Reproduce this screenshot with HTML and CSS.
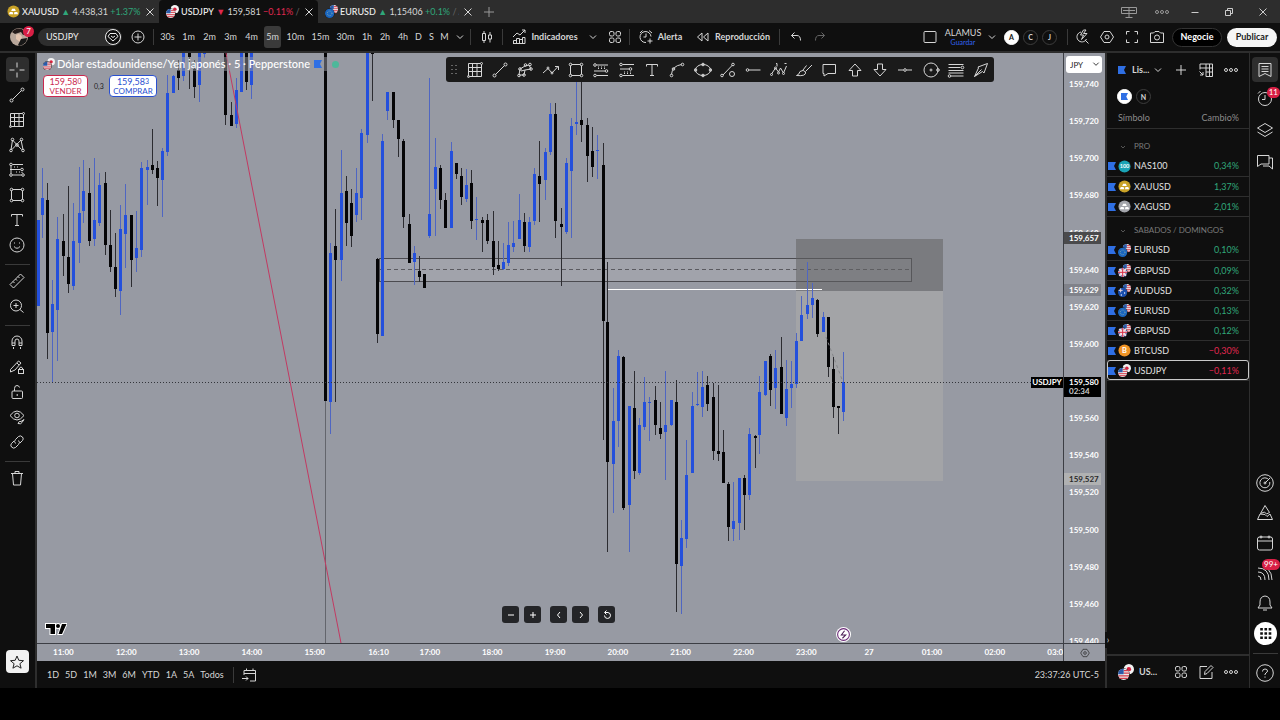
FILE: index.html
```html
<!DOCTYPE html>
<html lang="es">
<head>
  <meta charset="UTF-8" />
  <meta name="viewport" content="width=device-width, initial-scale=1.0"/>
  <title>USDJPY 159,581</title>
  <link rel="stylesheet" href="styles.css">
</head>
<body>

  <!-- icon sprite -->
  <svg class="sprite" aria-hidden="true">
    <symbol id="close" viewBox="0 0 18 18"><path d="M5.5 5.5l7 7M12.5 5.5l-7 7"/></symbol>
    <symbol id="plus" viewBox="0 0 18 18"><path d="M9 4v10M4 9h10"/></symbol>
    <symbol id="chevron" viewBox="0 0 18 18"><path d="M6 7.5l3 3 3-3"/></symbol>
    <symbol id="dots" viewBox="0 0 18 18"><circle cx="4" cy="9" r="1.5"/><circle cx="9" cy="9" r="1.5"/><circle cx="14" cy="9" r="1.5"/></symbol>
    <symbol id="circle-plus" viewBox="0 0 18 18"><circle cx="9" cy="9" r="6"/><path d="M9 5.5v7M5.500 9h7"/></symbol>
    <symbol id="gem" viewBox="0 0 18 18"><circle cx="9" cy="9" r="7.500" fill="#0f0f0f"/><path d="M6 5.500h6l2 3-5 4.500-5-4.500zM7 8l2 1.500L11 8"/></symbol>
    <symbol id="candles" viewBox="0 0 18 18"><path d="M4.500 5.500h3v7h-3zM6 3v2.500M6 12.500V15M10.500 7h3v4h-3zM12 4v3M12 11v3.500"/></symbol>
    <symbol id="indicators" viewBox="0 0 18 18"><path d="M3 9l4-4 3 2 5-5M12 2h3v3M3.500 15.500v-3h3v3M6.500 15.500v-5h3v5M9.500 15.500v-4h3v4M12.500 15.500v-6h2.500v6zM3 15.500h12"/></symbol>
    <symbol id="templates" viewBox="0 0 18 18"><rect x="3.500" y="3.500" width="4.500" height="4.500" rx="1.500"/><rect x="10" y="3.500" width="4.500" height="4.500" rx="1.500"/><rect x="3.500" y="10" width="4.500" height="4.500" rx="1.500"/><rect x="10" y="10" width="4.500" height="4.500" rx="1.500"/></symbol>
    <symbol id="alert" viewBox="0 0 18 18"><path d="M14 8.500A5.500 5.500 0 1 0 9 14.500M9 5.500V9H6.500M3 5l2.500-2.500M12 2.500L15 5M13 10.500v5M10.500 13h5"/></symbol>
    <symbol id="replay" viewBox="0 0 18 18"><path d="M8 5v8L3.500 9zM14 5v8L9.500 9z"/></symbol>
    <symbol id="undo" viewBox="0 0 18 18"><path d="M7.500 4.500L4.500 7.500l3 3M4.500 7.500H10q3.500 0 3.500 5"/></symbol>
    <symbol id="redo" viewBox="0 0 18 18"><path d="M10.500 4.500l3 3-3 3M13.500 7.500H8q-3.500 0-3.500 5"/></symbol>
    <symbol id="layout" viewBox="0 0 18 18"><rect x="3" y="3.500" width="12" height="11" rx="1"/></symbol>
    <symbol id="search" viewBox="0 0 18 18"><path d="M8 4a5 5 0 1 0 5.500 7M12 12l3.500 3.500M10.500 2l-3 5h3l-2 4.500 5.500-6h-3.500L13 2z"/></symbol>
    <symbol id="hexagon" viewBox="0 0 18 18"><path d="M6 3.500h6L15.500 9 12 14.500H6L2.500 9z"/><circle cx="9" cy="9" r="2"/></symbol>
    <symbol id="fullscreen" viewBox="0 0 18 18"><path d="M3.500 6.500v-3h3M11.500 3.500h3v3M14.500 11.500v3h-3M6.500 14.500h-3v-3"/></symbol>
    <symbol id="camera" viewBox="0 0 18 18"><path d="M2.500 5h3L7 3.500h4L12.500 5h3v9.500h-13z"/><circle cx="9" cy="9.500" r="2.500"/></symbol>
    <symbol id="monitor" viewBox="0 0 18 18"><path d="M1.500 4.500h15v6h-15zM9 4.500v10M5.500 14.500h7M3 7.500h12"/></symbol>
    <symbol id="minimize" viewBox="0 0 18 18"><path d="M5.500 9.500h7"/></symbol>
    <symbol id="restore" viewBox="0 0 18 18"><path d="M5.500 7.500h5v5h-5zM7.500 7.500v-2h5v5h-2"/></symbol>
    <symbol id="cross" viewBox="0 0 18 18"><path d="M9 1.500v5M9 11.500v5M1.500 9h5M11.500 9h5"/></symbol>
    <symbol id="line" viewBox="0 0 18 18"><circle cx="3.500" cy="14.500" r="1.500"/><circle cx="14.500" cy="3.500" r="1.500"/><path d="M4.500 13.500l9-9"/></symbol>
    <symbol id="grid" viewBox="0 0 18 18"><path d="M2.500 2.500h12M2.500 2.500v13M2.500 6.500h13M2.500 10.500h13M6.500 2.500v13M11 2.500v13M3.500 15.500h12v-12"/><circle cx="2.500" cy="15.500" r="1"/><circle cx="15.500" cy="2.500" r="1"/></symbol>
    <symbol id="pattern" viewBox="0 0 18 18"><path d="M3 14L4.500 4l9 9.500M4 13.500L13 4l2 9.500"/><circle cx="3" cy="14.500" r="1.300"/><circle cx="4.500" cy="3.500" r="1.300"/><circle cx="9" cy="9" r="1.300"/><circle cx="13.500" cy="3.500" r="1.300"/><circle cx="15" cy="14.500" r="1.300"/></symbol>
    <symbol id="fib" viewBox="0 0 18 18"><path d="M4.500 3.500H15M2 8.500h10.500M4.500 14h9M3 5v7.500" /><path d="M8 11h6v2M6 6h6" stroke-dasharray="1 2"/><circle cx="3" cy="3.500" r="1.300"/><circle cx="14" cy="8.500" r="1.300"/><circle cx="3" cy="14" r="1.300"/><circle cx="15" cy="14" r="1.300"/></symbol>
    <symbol id="long" viewBox="0 0 18 18"><path d="M4.500 4H16M2 10h11M4.500 14.500H16"/><path d="M6 7.500h9M6 6h9" stroke-dasharray="1 2"/><circle cx="3" cy="4" r="1.300"/><circle cx="14.500" cy="10" r="1.300"/><circle cx="3" cy="14.500" r="1.300"/></symbol>
    <symbol id="short" viewBox="0 0 18 18"><path d="M4.500 3.500H16M2 8h9M4.500 14.500H16"/><path d="M6 11h9M6 12.500h9" stroke-dasharray="1 2"/><circle cx="3" cy="3.500" r="1.300"/><circle cx="12.500" cy="8" r="1.300"/><circle cx="3" cy="14.500" r="1.300"/></symbol>
    <symbol id="rect" viewBox="0 0 18 18"><path d="M4.500 3.500h9M4.500 14.500h9M3.500 4.500v9M14.500 4.500v9"/><circle cx="3.500" cy="3.500" r="1.300"/><circle cx="14.500" cy="3.500" r="1.300"/><circle cx="3.500" cy="14.500" r="1.300"/><circle cx="14.500" cy="14.500" r="1.300"/></symbol>
    <symbol id="text" viewBox="0 0 18 18"><path d="M3.500 5.500v-2h11v2M9 3.500v11M7 14.500h4"/></symbol>
    <symbol id="smile" viewBox="0 0 18 18"><circle cx="9" cy="9" r="7"/><path d="M6 10.500q3 3.500 6 0M6.500 6.500v1M11.500 6.500v1"/></symbol>
    <symbol id="ruler" viewBox="0 0 18 18"><path d="M2 12.500L12.500 2 16 5.500 5.500 16zM5 9.500l1.500 1.500M7.500 7L9 8.500M10 4.500L11.500 6"/></symbol>
    <symbol id="zoom-in" viewBox="0 0 18 18"><circle cx="8" cy="8.500" r="5.500"/><path d="M12 12.500l3.500 3M8 6v5M5.500 8.500h5"/></symbol>
    <symbol id="magnet" viewBox="0 0 18 18"><path d="M4 12.500V8a5 5 0 0 1 10 0v4.500h-3V8a2 2 0 0 0-4 0v4.500zM4 10h3M11 10h3M5.500 14v2M12.500 14v2"/></symbol>
    <symbol id="pencil-lock" viewBox="0 0 18 18"><path d="M2.500 11.500l8-8.500 2.500 2-6 7-4.500 2zM9 5l2 2"/><rect x="10.500" y="11.500" width="5" height="4"/><path d="M11.500 11.500v-1.500q1.500-2 3 0v1.500"/></symbol>
    <symbol id="unlock" viewBox="0 0 18 18"><rect x="4" y="8" width="10.500" height="7.500" rx="1"/><path d="M6.500 8V5.500q0-3 2.500-3 2 0 2.500 2M9.200 11v2"/></symbol>
    <symbol id="eye" viewBox="0 0 18 18"><path d="M2 7.500q7-9 14 0-7 9-14 0z"/><circle cx="9" cy="7.500" r="2.300"/><path d="M10 15.500q1-3 3-2l3-2-2 3q-1 2-4 1z"/></symbol>
    <symbol id="link" viewBox="0 0 18 18"><path d="M7.500 10.500q-2-2 0-4l3-3q2-1.500 4 .5 1.500 2 0 3.500L12 10M10.500 7.500q2 2 0 4l-3 3q-2 1.500-4-.5-1.500-2 0-3.500L6 8"/></symbol>
    <symbol id="trash" viewBox="0 0 18 18"><path d="M3 4.500h12M7 4.500v-2h4v2M4.500 4.500l1 11.500h7l1-11.500"/></symbol>
    <symbol id="star" viewBox="0 0 18 18"><path d="M9 3l1.800 4.300 4.700.4-3.600 3 1.200 4.500L9 12.800l-4.100 2.400 1.200-4.500-3.600-3 4.700-.4z"/></symbol>
    <symbol id="path" viewBox="0 0 18 18"><path d="M3 14l1-6 5-3 4-1 2 4-6 1-1 5zM5 10l4-1"/><circle cx="3" cy="14.500" r="1.300"/><circle cx="4" cy="8" r="1.300"/><circle cx="8" cy="14" r="1.300"/><circle cx="9.500" cy="4" r="1.300"/><circle cx="15" cy="8" r="1.300"/><circle cx="14" cy="3.500" r="1.300"/></symbol>
    <symbol id="zigzag" viewBox="0 0 18 18"><path d="M1 12l5-4.500 4 4.500 6-6.500M13 5.500h3.500V9"/><circle cx="6" cy="7" r="1"/><circle cx="10" cy="12" r="1"/></symbol>
    <symbol id="curve" viewBox="0 0 18 18"><path d="M3.500 13.500Q4 5 13.500 3.500"/><circle cx="3.500" cy="14.500" r="1.300"/><circle cx="5.500" cy="8" r="1.300"/><circle cx="14.500" cy="3.500" r="1.300"/></symbol>
    <symbol id="ellipse" viewBox="0 0 18 18"><ellipse cx="9" cy="9" rx="7.500" ry="5.500"/><circle cx="1.500" cy="9" r="1.300"/><circle cx="16.500" cy="9" r="1.300"/><circle cx="9" cy="3.500" r="1.300"/><circle cx="9" cy="14.500" r="1.300"/></symbol>
    <symbol id="line-circle" viewBox="0 0 18 18"><path d="M4 14l9.500-10"/><circle cx="3" cy="14.500" r="1.300"/><circle cx="14" cy="3.500" r="1.300"/><circle cx="13" cy="13" r="2.500"/></symbol>
    <symbol id="hray" viewBox="0 0 18 18"><circle cx="3.500" cy="9" r="1.300"/><path d="M5 9h11.500"/></symbol>
    <symbol id="waves" viewBox="0 0 18 18"><path d="M1.500 13l4-6 3 4 2-4 3 5 3-7M6 2.500h1v3M14.500 2.500h2"/><circle cx="5.500" cy="7" r="1"/><circle cx="8.500" cy="12" r="1"/><circle cx="1.500" cy="13.500" r="1"/><circle cx="13.500" cy="12.500" r="1"/></symbol>
    <symbol id="brush" viewBox="0 0 18 18"><path d="M1.500 14.500q2.500-.5 3.500-4 3.500-2.500 5.500.5 1 4.500-9 3.500zM8 9l3.500-4.500M10.500 10.500L17 4"/></symbol>
    <symbol id="callout" viewBox="0 0 18 18"><path d="M3 3.500h12.500v9H8L4 15v-2.500H3z"/></symbol>
    <symbol id="arrow-up" viewBox="0 0 18 18"><path d="M9 3l6 6.500h-3.500v5.500h-5V9.500H3z"/></symbol>
    <symbol id="arrow-down" viewBox="0 0 18 18"><path d="M9 15L3 8.500h3.500V3h5v5.500H15z"/></symbol>
    <symbol id="hline" viewBox="0 0 18 18"><circle cx="9" cy="9" r="1.300"/><path d="M2 9h5.500M10.500 9H16"/></symbol>
    <symbol id="target" viewBox="0 0 18 18"><circle cx="9" cy="9" r="7"/><circle cx="9" cy="9" r="1"/><circle cx="16" cy="9" r="1.300"/></symbol>
    <symbol id="levels" viewBox="0 0 18 18"><path d="M1.500 3.500h15M1.500 6.500h12M1.500 9.500h15M1.500 12h15M4 15h12.500"/><circle cx="15.500" cy="6.500" r="1.300"/><circle cx="2.500" cy="15" r="1.300"/></symbol>
    <symbol id="arrow-ne" viewBox="0 0 18 18"><path d="M2.500 15.500L6.500 7 6 6l9.500-3.500L12 12l-1.500-1.500zM2.500 15.500l7-7"/></symbol>
    <symbol id="table-add" viewBox="0 0 18 18"><path d="M3 8.500V3h12.500v12.500H9M3 7h12.500M9 3v12.500M9 11h6.500M12.500 3v12.500M2.500 10.500L6 14M6 11v3H3"/></symbol>
    <symbol id="bookmark" viewBox="0 0 18 18"><path d="M3 2.500h12v13l-6-3-6 3zM5.500 5.500h7M5.500 8h7M5.500 10.500h7"/></symbol>
    <symbol id="clock" viewBox="0 0 18 18"><circle cx="9" cy="10" r="6.500"/><path d="M9 6v4.500H6M2 4.500L4.500 2"/></symbol>
    <symbol id="layers" viewBox="0 0 18 18"><path d="M9 2.500l7.500 4.500L9 11.500 1.500 7zM1.500 11L9 15.500l7.500-4.500"/></symbol>
    <symbol id="chat" viewBox="0 0 18 18"><path d="M1.500 2.500h11.500v8.500H5l-3.500 2.500zM13 5h3.500v11L13 13H7"/></symbol>
    <symbol id="radar" viewBox="0 0 18 18"><circle cx="9" cy="9" r="8.300"/><path d="M13 6a5 5 0 1 0 .8 2M9 9l5-5"/><circle cx="9" cy="9" r="1"/></symbol>
    <symbol id="pyramid" viewBox="0 0 18 18"><path d="M9 1.500l4.500 7-3 1.500-2-2-4 1.500zM4 10l-2.500 5.500h15L14 10l-3 2.500-2-2z"/></symbol>
    <symbol id="calendar" viewBox="0 0 18 18"><rect x="1.500" y="3" width="15" height="13" rx="2"/><path d="M1.500 7h15"/><circle cx="5" cy="3" r="1"/><circle cx="13" cy="3" r="1"/></symbol>
    <symbol id="feed" viewBox="0 0 18 18"><path d="M2 12q3 0 3 4M2 8q7 0 7 8M2 4q11 0 11 12M12 5q4 4 4 11"/></symbol>
    <symbol id="bell" viewBox="0 0 18 18"><path d="M2 14h14l-2-3V8q0-5.500-5-6-5 .5-5 6v3zM7 16h4"/></symbol>
    <symbol id="apps" viewBox="0 0 18 18"><path d="M4 5h2.500M8 5h2.500M12 5h2.500M4 9h2.500M8 9h2.500M12 9h2.500M4 13h2.500M8 13h2.500M12 13h2.500" stroke="#0f0f0f" stroke-width="2.500"/></symbol>
    <symbol id="help" viewBox="0 0 18 18"><circle cx="9" cy="9" r="8.300"/><path d="M6.500 7.500Q6.500 5 9 5q2.500 0 2.500 2 0 1-1.500 2T9 11M9 12.500v1.200"/></symbol>
    <symbol id="edit" viewBox="0 0 18 18"><path d="M10 3.500H3v12h12V9M7.500 11.500l.5-3 6-6 2 2-6 6z"/></symbol>
    <symbol id="go-to" viewBox="0 0 18 18"><path d="M4 9V4.500h11.500V15H10M4 7.500h11.500M6.500 2.500v2M13 2.500v2M2 12.500h6M6 10.500l2 2-2 2"/></symbol>
    <symbol id="flag" viewBox="0 0 8 8"><path d="M0 0h8L6 4l2 4H0z" fill="#2f6fe4" stroke="none"/></symbol>
    <symbol id="us" viewBox="0 0 14 14"><circle cx="7" cy="7" r="7" fill="#eee" stroke="none"/><path d="M7 2.500h5.500M7 5.500h7M.5 9h13M2 12h10" stroke="#d33a4a" stroke-width="1.500"/><path d="M0 7a7 7 0 0 1 7-7v7z" fill="#2a5aa8" stroke="none"/></symbol>
    <symbol id="eu" viewBox="0 0 14 14"><circle cx="7" cy="7" r="7" fill="#1b66bf" stroke="none"/><circle cx="7" cy="7" r="3.500" stroke="#cfd79a" stroke-dasharray="1 1.700"/></symbol>
    <symbol id="gb" viewBox="0 0 14 14"><circle cx="7" cy="7" r="7" fill="#3c4f9c" stroke="none"/><path d="M7 0v14M0 7h14M2 2l10 10M12 2L2 12" stroke="#f3dfe3" stroke-width="3"/><path d="M7 0v14M0 7h14" stroke="#d8304a" stroke-width="1.500"/></symbol>
    <symbol id="au" viewBox="0 0 14 14"><circle cx="7" cy="7" r="7" fill="#1a4fae" stroke="none"/><path d="M1 4h6M4 1v6" stroke="#e8d6dc" stroke-width="1.500"/><circle cx="10" cy="8" r="1" fill="#fff" stroke="none"/><circle cx="5" cy="11" r="1" fill="#fff" stroke="none"/></symbol>
    <symbol id="jp" viewBox="0 0 14 14"><circle cx="7" cy="7" r="7" fill="#f2f2f2" stroke="none"/><circle cx="7" cy="7" r="3" fill="#d8203e" stroke="none"/></symbol>
    <symbol id="usdjpy" viewBox="0 0 14 14"><use href="#jp" x="5" y="0" width="9" height="9"/><circle cx="5" cy="9" r="5.300" fill="#0f0f0f" stroke="none"/><use href="#us" x="0" y="4" width="10" height="10"/></symbol>
    <symbol id="eurusd" viewBox="0 0 14 14"><use href="#us" x="5" y="0" width="9" height="9"/><circle cx="5" cy="9" r="5.300" fill="#0f0f0f" stroke="none"/><use href="#eu" x="0" y="4" width="10" height="10"/></symbol>
    <symbol id="gbpusd" viewBox="0 0 14 14"><use href="#us" x="5" y="0" width="9" height="9"/><circle cx="5" cy="9" r="5.300" fill="#0f0f0f" stroke="none"/><use href="#gb" x="0" y="4" width="10" height="10"/></symbol>
    <symbol id="audusd" viewBox="0 0 14 14"><use href="#us" x="5" y="0" width="9" height="9"/><circle cx="5" cy="9" r="5.300" fill="#0f0f0f" stroke="none"/><use href="#au" x="0" y="4" width="10" height="10"/></symbol>
    <symbol id="gold" viewBox="0 0 14 14"><circle cx="7" cy="7" r="6.500" fill="#c9a227" stroke="none"/><path d="M5.500 4h3l1 2.500h-5zM3 7.500h3l.8 2.500H2zM8 7.500h3l1 2.500H7.500z" fill="#fff" stroke="none"/></symbol>
    <symbol id="silver" viewBox="0 0 14 14"><circle cx="7" cy="7" r="6.500" fill="#a3a5ab" stroke="none"/><path d="M5.500 4h3l1 2.500h-5zM3 7.500h3l.8 2.500H2zM8 7.500h3l1 2.500H7.500z" fill="#fff" stroke="none"/></symbol>
  </svg>

  <div class="app">

    <header class="tabs">
      <div class="tab">
        <svg class="coin"><use href="#gold"/></svg>
        <a class="tab-link" href="#xauusd"><b>XAUUSD</b> <i class="up">▲</i> 4.438,31 <span class="up">+1.37%</span> <span class="dim">/</span></a>
        <button class="tab-close" aria-label="Cerrar XAUUSD"><svg class="icon"><use href="#close"/></svg></button>
      </div>
      <div class="tab active">
        <svg class="coin"><use href="#usdjpy"/></svg>
        <a class="tab-link" href="#usdjpy-chart"><b>USDJPY</b> <i class="down">▼</i> 159,581 <span class="down">−0.11%</span> <span class="dim">/ A</span></a>
        <button class="tab-close" aria-label="Cerrar USDJPY"><svg class="icon"><use href="#close"/></svg></button>
      </div>
      <div class="tab">
        <svg class="coin"><use href="#eurusd"/></svg>
        <a class="tab-link" href="#eurusd-chart"><b>EURUSD</b> <i class="up">▲</i> 1,15406 <span class="up">+0.1%</span> <span class="dim">/ Al</span></a>
        <button class="tab-close" aria-label="Cerrar EURUSD"><svg class="icon"><use href="#close"/></svg></button>
      </div>
      <button class="new-tab" aria-label="Nueva pestaña"><svg class="icon"><use href="#plus"/></svg></button>
      <div class="window-controls">
        <button class="screens" aria-label="Pantallas"><svg class="icon"><use href="#monitor"/></svg></button>
        <button class="screens" aria-label="Más"><svg class="icon"><use href="#dots"/></svg></button>
        <button aria-label="Minimizar"><svg class="icon"><use href="#minimize"/></svg></button>
        <button aria-label="Restaurar"><svg class="icon"><use href="#restore"/></svg></button>
        <button aria-label="Cerrar"><svg class="icon"><use href="#close"/></svg></button>
      </div>
    </header>

    <nav class="topbar">
      <button class="avatar" aria-label="Perfil">
        <svg viewBox="0 0 18 18"><circle cx="9" cy="9" r="9" fill="#b9a79b"/><path d="M2 4q4-5 10-3l4 5-3 1-2-3-6 2z" fill="#241b1a"/><path d="M6 7q4-3 6 2l-2 5-4-3z" fill="#e4c5b1"/><path d="M8 17l3-6 6-1q0 6-8 8z" fill="#171717"/></svg>
        <span class="badge">7</span>
      </button>
      <button class="symbol">USDJPY <svg class="icon"><use href="#gem"/></svg></button>
      <button class="add" aria-label="Comparar"><svg class="icon"><use href="#circle-plus"/></svg></button>
      <span class="sep"></span>
      <div class="intervals">
        <button>30s</button><button>1m</button><button>2m</button><button>3m</button><button>4m</button><button class="current">5m</button><button class="long">10m</button><button class="long">15m</button><button class="long">30m</button><button class="hour">1h</button><button class="hour">2h</button><button class="hour">4h</button><button class="day">D</button><button class="day">S</button><button class="day">M</button>
        <button class="more" aria-label="Más intervalos"><svg class="icon"><use href="#chevron"/></svg></button>
      </div>
      <span class="sep"></span>
      <button class="tool" aria-label="Velas"><svg class="icon"><use href="#candles"/></svg></button>
      <span class="sep"></span>
      <button class="labeled indicators"><svg class="icon"><use href="#indicators"/></svg>Indicadores</button>
      <button class="arrow fav" aria-label="Favoritos"><svg class="icon"><use href="#chevron"/></svg></button>
      <button class="tool templates" aria-label="Plantillas"><svg class="icon"><use href="#templates"/></svg></button>
      <span class="sep"></span>
      <button class="labeled alert"><svg class="icon"><use href="#alert"/></svg>Alerta</button>
      <button class="labeled replay"><svg class="icon"><use href="#replay"/></svg>Reproducción</button>
      <span class="sep"></span>
      <button class="tool" aria-label="Deshacer"><svg class="icon"><use href="#undo"/></svg></button>
      <button class="arrow dim" aria-label="Rehacer"><svg class="icon"><use href="#redo"/></svg></button>

      <div class="right-tools">
        <button class="tool" aria-label="Diseño"><svg class="icon"><use href="#layout"/></svg></button>
        <button class="layout-name">ALAMUS<small>Guardar</small></button>
        <button class="arrow" aria-label="Diseños"><svg class="icon"><use href="#chevron"/></svg></button>
        <button class="dot on">A</button>
        <button class="dot">C</button>
        <button class="dot">J</button>
        <span class="sep"></span>
        <button class="square" aria-label="Buscar"><svg class="icon"><use href="#search"/></svg></button>
        <button class="square" aria-label="Configuración"><svg class="icon"><use href="#hexagon"/></svg></button>
        <button class="square" aria-label="Pantalla completa"><svg class="icon"><use href="#fullscreen"/></svg></button>
        <button class="square" aria-label="Captura"><svg class="icon"><use href="#camera"/></svg></button>
        <button class="pill trade">Negocie</button>
        <button class="pill publish">Publicar</button>
      </div>
    </nav>

    <div class="main">

      <aside class="drawing">
        <button class="active" aria-label="Cursor"><svg class="icon"><use href="#cross"/></svg></button>
        <button aria-label="Línea"><svg class="icon"><use href="#line"/></svg></button>
        <button aria-label="Gann"><svg class="icon"><use href="#grid"/></svg></button>
        <button aria-label="Patrones"><svg class="icon"><use href="#pattern"/></svg></button>
        <button aria-label="Previsión"><svg class="icon"><use href="#fib"/></svg></button>
        <button aria-label="Rectángulo"><svg class="icon"><use href="#rect"/></svg></button>
        <button aria-label="Texto"><svg class="icon"><use href="#text"/></svg></button>
        <button aria-label="Iconos"><svg class="icon"><use href="#smile"/></svg></button>
        <hr>
        <button aria-label="Medir"><svg class="icon"><use href="#ruler"/></svg></button>
        <button aria-label="Acercar"><svg class="icon"><use href="#zoom-in"/></svg></button>
        <hr>
        <button aria-label="Imán"><svg class="icon"><use href="#magnet"/></svg></button>
        <button aria-label="Modo dibujo"><svg class="icon"><use href="#pencil-lock"/></svg></button>
        <button aria-label="Bloquear"><svg class="icon"><use href="#unlock"/></svg></button>
        <button aria-label="Ocultar"><svg class="icon"><use href="#eye"/></svg></button>
        <button aria-label="Vincular"><svg class="icon"><use href="#link"/></svg></button>
        <hr>
        <button aria-label="Eliminar"><svg class="icon"><use href="#trash"/></svg></button>
        <button class="favorite" aria-label="Favoritos"><svg class="icon"><use href="#star"/></svg></button>
      </aside>

      <section class="center">
        <div class="chart">
          <div class="pane">
            <svg class="plot" viewBox="37 53 1026 590" preserveAspectRatio="none" role="img" aria-label="Gráfico de velas USDJPY">
              <!-- supply zone -->
              <rect class="zone" x="379.500" y="258.500" width="532" height="23"/>
              <path class="zone-mid" d="M380 269.500H911"/>
              <!-- short position -->
              <rect class="stop" x="796" y="239" width="147" height="52"/>
              <rect class="target" x="796" y="291" width="147" height="190"/>
              <path class="break" d="M607 289.500H822"/>
              <path class="session" d="M325.500 401V643"/>
              <g id="candles-layer"></g>
              <path class="entry" d="M826 337L843 382"/>
              <path class="trend" d="M226 53L341 643"/>
              <path class="last" d="M37 382.500H1063"/>
            </svg>

            <div class="legend">
              <div class="title">
                <svg class="coin"><use href="#usdjpy"/></svg>
                <h1>Dólar estadounidense/Yen japonés · 5 · Pepperstone</h1>
                <svg class="flag"><use href="#flag"/></svg>
                <span class="market"></span>
              </div>
              <div class="quotes">
                <button class="sell">159,58<sup>0</sup><span>VENDER</span></button>
                <span class="spread">0,3</span>
                <button class="buy">159,58<sup>3</sup><span>COMPRAR</span></button>
              </div>
            </div>

            <div class="favorites">
              <svg class="grip" viewBox="0 0 6 9"><path d="M0 .5h2M4 .5h2M0 4.500h2M4 4.500h2M0 8.500h2M4 8.500h2" stroke="#666"/></svg>
              <button aria-label="Gann"><svg class="icon"><use href="#grid"/></svg></button>
              <button aria-label="Línea"><svg class="icon"><use href="#line"/></svg></button>
              <button aria-label="Ruta"><svg class="icon"><use href="#path"/></svg></button>
              <button aria-label="Polilínea"><svg class="icon"><use href="#zigzag"/></svg></button>
              <button aria-label="Rectángulo"><svg class="icon"><use href="#rect"/></svg></button>
              <button aria-label="Posición larga"><svg class="icon"><use href="#long"/></svg></button>
              <button aria-label="Posición corta"><svg class="icon"><use href="#short"/></svg></button>
              <button aria-label="Texto"><svg class="icon"><use href="#text"/></svg></button>
              <button aria-label="Curva"><svg class="icon"><use href="#curve"/></svg></button>
              <button aria-label="Elipse"><svg class="icon"><use href="#ellipse"/></svg></button>
              <button aria-label="Línea de información"><svg class="icon"><use href="#line-circle"/></svg></button>
              <button aria-label="Rayo horizontal"><svg class="icon"><use href="#hray"/></svg></button>
              <button aria-label="Ondas"><svg class="icon"><use href="#waves"/></svg></button>
              <button aria-label="Pincel"><svg class="icon"><use href="#brush"/></svg></button>
              <button aria-label="Comentario"><svg class="icon"><use href="#callout"/></svg></button>
              <button aria-label="Flecha arriba"><svg class="icon"><use href="#arrow-up"/></svg></button>
              <button aria-label="Flecha abajo"><svg class="icon"><use href="#arrow-down"/></svg></button>
              <button aria-label="Línea horizontal"><svg class="icon"><use href="#hline"/></svg></button>
              <button aria-label="Círculo"><svg class="icon"><use href="#target"/></svg></button>
              <button aria-label="Niveles"><svg class="icon"><use href="#levels"/></svg></button>
              <button aria-label="Flecha"><svg class="icon"><use href="#arrow-ne"/></svg></button>
            </div>

            <div class="navigation">
              <button aria-label="Alejar"><svg viewBox="0 0 16 16"><path d="M5 8h6"/></svg></button>
              <button aria-label="Acercar"><svg viewBox="0 0 16 16"><path d="M5 8h6M8 5v6"/></svg></button>
              <button class="group" aria-label="Atrás"><svg viewBox="0 0 16 16"><path d="M9 5L6.500 8 9 11"/></svg></button>
              <button aria-label="Adelante"><svg viewBox="0 0 16 16"><path d="M7 5l2.500 3L7 11"/></svg></button>
              <button class="group" aria-label="Restablecer"><svg viewBox="0 0 16 16"><path d="M6 5.500h3a3 3 0 1 1-3.500 3M7.500 3.500l-2 2 2 2"/></svg></button>
            </div>

            <svg class="logo" viewBox="0 0 22 12"><path d="M1 1h9v10H5.500V5H1zM13.500 11L17 1h4.500L17 11zM11 3a2 2 0 1 0 4 0 2 2 0 0 0-4 0z" fill="#000" stroke="#fff" stroke-width="2" paint-order="stroke"/></svg>
            <svg class="event" viewBox="0 0 14 14"><circle cx="7" cy="7" r="7" fill="#fff"/><circle cx="7" cy="7" r="5.500" fill="#fff" stroke="#6b2a78"/><path d="M8 3.500L5 7.500h4L6 10.500" fill="none" stroke="#4a1d54"/></svg>
            <span class="tag-symbol">USDJPY</span>
          </div>

          <div class="price-axis">
            <select aria-label="Divisa"><option>JPY</option></select>
            <svg class="icon select-arrow"><use href="#chevron"/></svg>
            <ol>
              <li>159,740</li><li>159,720</li><li>159,700</li><li>159,680</li>
              <li>159,660</li><li>159,640</li><li>159,620</li><li>159,600</li>
              <li>159,580</li><li>159,560</li><li>159,540</li><li>159,520</li>
              <li>159,500</li><li>159,480</li><li>159,460</li><li>159,440</li>
            </ol>
            <span class="tag stop-tag">159,657</span>
            <span class="tag entry-tag">159,629</span>
            <span class="tag target-tag">159,527</span>
            <span class="tag last-tag">159,580<small>02:34</small></span>
          </div>

          <div class="time-axis">
            <div class="hours">
              <span>11:00</span><span>12:00</span><span>13:00</span><span>14:00</span><span>15:00</span><span>16:10</span><span class="short">17:00</span><span>18:00</span><span>19:00</span><span>20:00</span><span>21:00</span><span>22:00</span><span>23:00</span><span>27</span><span>01:00</span><span>02:00</span><span>03:00</span>
            </div>
          </div>
          <button class="axis-settings" aria-label="Configurar ejes"><svg class="icon"><use href="#hexagon"/></svg></button>
        </div>

        <footer class="ranges">
          <button>1D</button><button>5D</button><button>1M</button><button>3M</button><button>6M</button><button>YTD</button><button>1A</button><button>5A</button><button>Todos</button>
          <span class="sep"></span>
          <button aria-label="Ir a"><svg class="icon"><use href="#go-to"/></svg></button>
          <time>23:37:26 UTC-5</time>
        </footer>
      </section>

      <aside class="watchlist">
        <button class="collapse" aria-label="Ocultar panel">›</button>
        <div class="list-head">
          <svg class="flag"><use href="#flag"/></svg>
          <button class="list-name">Lis... <svg class="icon"><use href="#chevron"/></svg></button>
          <button class="square" aria-label="Añadir"><svg class="icon"><use href="#plus"/></svg></button>
          <button class="square" aria-label="Vista"><svg class="icon"><use href="#table-add"/></svg></button>
          <button class="square" aria-label="Más"><svg class="icon"><use href="#dots"/></svg></button>
        </div>
        <div class="list-chips">
          <button class="dot on" aria-label="Lista azul"><svg class="flag"><use href="#flag"/></svg></button>
          <button class="dot">N</button>
        </div>
        <table>
          <thead>
            <tr><th colspan="2">Símbolo</th><th>Cambio%</th></tr>
          </thead>
          <tbody>
            <tr class="group first"><th colspan="3"><svg class="icon"><use href="#chevron"/></svg>PRO</th></tr>
            <tr><td><svg class="flag"><use href="#flag"/></svg></td><td><span class="name"><svg class="coin" viewBox="0 0 14 14"><circle cx="7" cy="7" r="6.500" fill="#1aa3b5"/><text x="7" y="9" text-anchor="middle">100</text></svg>NAS100</span></td><td class="up">0,34%</td></tr>
            <tr><td><svg class="flag"><use href="#flag"/></svg></td><td><span class="name"><svg class="coin"><use href="#gold"/></svg>XAUUSD</span></td><td class="up">1,37%</td></tr>
            <tr><td><svg class="flag"><use href="#flag"/></svg></td><td><span class="name"><svg class="coin"><use href="#silver"/></svg>XAGUSD</span></td><td class="up">2,01%</td></tr>
            <tr class="group"><th colspan="3"><svg class="icon"><use href="#chevron"/></svg>SABADOS / DOMINGOS</th></tr>
            <tr><td><svg class="flag"><use href="#flag"/></svg></td><td><span class="name"><svg class="coin"><use href="#eurusd"/></svg>EURUSD</span></td><td class="up">0,10%</td></tr>
            <tr><td><svg class="flag"><use href="#flag"/></svg></td><td><span class="name"><svg class="coin"><use href="#gbpusd"/></svg>GBPUSD</span></td><td class="up">0,09%</td></tr>
            <tr><td><svg class="flag"><use href="#flag"/></svg></td><td><span class="name"><svg class="coin"><use href="#audusd"/></svg>AUDUSD</span></td><td class="up">0,32%</td></tr>
            <tr><td><svg class="flag"><use href="#flag"/></svg></td><td><span class="name"><svg class="coin"><use href="#eurusd"/></svg>EURUSD</span></td><td class="up">0,13%</td></tr>
            <tr><td><svg class="flag"><use href="#flag"/></svg></td><td><span class="name"><svg class="coin"><use href="#gbpusd"/></svg>GBPUSD</span></td><td class="up">0,12%</td></tr>
            <tr><td><svg class="flag"><use href="#flag"/></svg></td><td><span class="name"><svg class="coin" viewBox="0 0 14 14"><circle cx="7" cy="7" r="6.500" fill="#ef9325"/><text class="btc" x="7" y="10" text-anchor="middle">B</text></svg>BTCUSD</span></td><td class="down">−0,30%</td></tr>
            <tr class="selected"><td><svg class="flag"><use href="#flag"/></svg></td><td><span class="name"><svg class="coin"><use href="#usdjpy"/></svg>USDJPY</span></td><td class="down">−0,11%</td></tr>
          </tbody>
        </table>
        <div class="list-foot">
          <svg class="coin"><use href="#usdjpy"/></svg>
          <b>US...</b>
          <button class="square" aria-label="Módulos"><svg class="icon"><use href="#templates"/></svg></button>
          <button class="square" aria-label="Notas"><svg class="icon"><use href="#edit"/></svg></button>
          <button class="square" aria-label="Más"><svg class="icon"><use href="#dots"/></svg></button>
        </div>
      </aside>

      <nav class="rail">
        <button class="active" aria-label="Lista de seguimiento"><svg class="icon"><use href="#bookmark"/></svg></button>
        <button aria-label="Alertas"><svg class="icon"><use href="#clock"/></svg><span class="badge">11</span></button>
        <button aria-label="Objetos"><svg class="icon"><use href="#layers"/></svg></button>
        <button aria-label="Chats"><svg class="icon"><use href="#chat"/></svg></button>
        <div class="rail-bottom">
          <button aria-label="Analizadores"><svg class="icon"><use href="#radar"/></svg></button>
          <button aria-label="Pine"><svg class="icon"><use href="#pyramid"/></svg></button>
          <button aria-label="Calendario"><svg class="icon"><use href="#calendar"/></svg></button>
          <button aria-label="Ideas"><svg class="icon"><use href="#feed"/></svg><span class="badge">99+</span></button>
          <button aria-label="Notificaciones"><svg class="icon"><use href="#bell"/></svg></button>
          <button aria-label="Productos"><svg class="icon apps"><use href="#apps"/></svg></button>
          <hr>
          <button aria-label="Ayuda"><svg class="icon"><use href="#help"/></svg></button>
        </div>
      </nav>

    </div>
  </div>

  <script src="chart.js"></script>
</body>
</html>
```
FILE: styles.css
```css
* {
  box-sizing: border-box;
}

body {
  margin: 0;
  height: 100vh;
  padding-bottom: 32px;
  background: #000;
  color: #d6d6d6;
  font-family: Lato, "Open Sans", sans-serif;
  font-size: 9px;
  line-height: 12px;
  overflow: hidden;
}

button, select {
  font: inherit;
  color: inherit;
  background: none;
  border: none;
  padding: 0;
  margin: 0;
}

button {
  display: flex;
  align-items: center;
  justify-content: center;
  flex-shrink: 0;
}

a {
  color: inherit;
  text-decoration: none;
}

hr {
  width: 25px;
  height: 1px;
  margin: 7px 0 3px;
  border: none;
  background: #3a3a3a;
}

.sprite {
  display: none;
}

.icon {
  width: 18px;
  height: 18px;
  flex-shrink: 0;
  fill: none;
  stroke: currentColor;
}

.coin {
  width: 13px;
  height: 13px;
  flex-shrink: 0;
  fill: none;
}

.flag {
  width: 8px;
  height: 8px;
  flex-shrink: 0;
}

.up { color: #2fa77a; }
.down { color: #e0284f; }
.dim { color: #666; }

.sep {
  width: 1px;
  height: 16px;
  flex-shrink: 0;
  background: #3a3a3a;
}

.badge {
  position: absolute;
  top: 3px;
  right: 0;
  min-width: 11px;
  height: 11px;
  padding: 0 2px;
  border-radius: 6px;
  background: #d81f45;
  color: #fff;
  font-size: 8px;
  line-height: 11px;
  text-align: center;
}

.app {
  height: 100%;
  display: flex;
  flex-direction: column;
}

/* window tabs */
.tabs {
  display: flex;
  height: 23px;
  background: #2d2d2d;
}

.tab {
  display: flex;
  align-items: center;
  gap: 2px;
  width: 159px;
  padding: 0 2px 0 7px;
  border-radius: 4px 4px 0 0;
}

.tab.active {
  background: #0f0f0f;
}

.tab-link {
  flex: 1;
  min-width: 0;
  overflow: hidden;
  white-space: pre;
}

.tab-link i {
  font-style: normal;
}

.tab b {
  font-weight: 500;
  color: #eee;
}

.tab-close {
  width: 14px;
}

.new-tab {
  width: 24px;
  color: #999;
}

.window-controls {
  display: flex;
  margin-left: auto;
  color: #ccc;
}

.window-controls button {
  width: 34px;
}

.window-controls .screens {
  width: 33px;
  color: #999;
}

/* top toolbar */
.topbar {
  display: flex;
  align-items: center;
  height: 30px;
  background: #0f0f0f;
  border-bottom: 2px solid #2e2e2e;
}

.avatar {
  position: relative;
  width: 38px;
  height: 28px;
}

.avatar svg {
  width: 18px;
  height: 18px;
}

.avatar .badge {
  right: 4px;
}

.symbol {
  width: 84px;
  height: 18px;
  padding: 0 0 0 8px;
  justify-content: space-between;
  border-radius: 9px;
  background: #2e2e2e;
  color: #eee;
}

.add {
  width: 31px;
}

.intervals {
  display: flex;
  align-items: center;
  margin: 0 2px 0 3px;
}

.intervals button {
  width: 21px;
  height: 22px;
}

.intervals .current {
  width: 17px;
  margin: 0 2px;
  border-radius: 3px;
  background: #3a3a3a;
}

.intervals .long { width: 25px; }
.intervals .hour { width: 18px; }
.intervals .day { width: 13px; }
.intervals .more { width: 17px; }

.tool {
  width: 31px;
}

.templates {
  width: 28px;
}

.arrow {
  width: 18px;
}

.fav {
  width: 16px;
}

.labeled {
  gap: 3px;
  font-weight: bold;
  white-space: nowrap;
}

.indicators {
  width: 82px;
}

.alert {
  width: 59px;
}

.replay {
  width: 90px;
  justify-content: flex-start;
  padding-left: 5px;
}

.right-tools {
  display: flex;
  align-items: center;
  margin-left: auto;
  padding-right: 3px;
}

.layout-name {
  flex-direction: column;
  width: 36px;
  line-height: 10px;
}

.layout-name small {
  color: #2f62f0;
  font-size: 7px;
  line-height: 8px;
}

.right-tools .arrow {
  width: 21px;
}

.dot {
  width: 15px;
  height: 15px;
  margin: 0 2px;
  border: 1px solid #3c3c3c;
  border-radius: 50%;
  font-size: 7px;
  font-weight: bold;
}

.dot.on {
  background: #fff;
  border-color: #fff;
  color: #111;
}

.right-tools .sep {
  margin: 0 1px 0 8px;
}

.square {
  width: 25px;
  height: 25px;
}

.pill {
  height: 19px;
  width: 50px;
  margin-left: 5px;
  border-radius: 10px;
  font-weight: bold;
}

.trade {
  margin-left: 3px;
  background: #000;
  border: 1px solid #333;
  color: #fff;
}

.publish {
  background: #f5f5f5;
  color: #1a1a1a;
}

/* body */
.main {
  flex: 1;
  display: flex;
  min-height: 0;
}

.drawing {
  display: flex;
  flex-direction: column;
  align-items: center;
  width: 37px;
  padding: 4px 1px 15px 0;
  background: #0f0f0f;
  border-right: 2px solid #2e2e2e;
}

.drawing button {
  width: 23px;
  height: 25px;
}

.drawing .active,
.rail .active {
  border-radius: 4px;
  background: #2e2e2e;
}

.drawing .favorite {
  height: 23px;
  margin-top: auto;
  border-radius: 4px;
  background: #f2f2f2;
  color: #222;
}

.center {
  flex: 1;
  min-width: 0;
  display: flex;
  flex-direction: column;
}

.chart {
  flex: 1;
  min-height: 0;
  display: grid;
  grid-template-columns: 1fr 42px;
  grid-template-rows: 1fr 18px;
  background: #979aa3;
}

.pane {
  position: relative;
  min-height: 0;
  overflow: hidden;
}

.plot {
  position: absolute;
  width: 100%;
  height: 100%;
}

.plot path { fill: none; }
.wick-up { stroke: #4f66c2; }
.wick-down { stroke: #2c2c31; }
.body-up { fill: #2450dc; }
.body-down { fill: #050507; }

.zone {
  fill: rgba(190, 190, 196, 0.25);
  stroke: #4b4b50;
}

.zone-mid {
  stroke: #5a5a60;
  stroke-dasharray: 4 3;
}

.stop { fill: rgba(98, 98, 98, 0.55); }
.target { fill: rgba(178, 178, 172, 0.45); }
.trend { stroke: #c23a62; }
.session { stroke: #63656c; }
.plot .break { stroke: #fff; }

.entry {
  stroke: #85868a;
  stroke-dasharray: 3 3;
}

.last {
  stroke: #33353b;
  stroke-dasharray: 1 2;
}

.legend {
  position: absolute;
  top: 4px;
  left: 6px;
}

.title {
  display: flex;
  align-items: center;
  height: 14px;
  gap: 2px;
  background: rgba(151, 154, 163, 0.5);
}

.title .coin {
  width: 12px;
  height: 12px;
}

.title h1 {
  margin: 0 2px 0 0;
  color: #fff;
  font-size: 11px;
  font-weight: 500;
  line-height: 14px;
}

.market {
  width: 7px;
  height: 7px;
  margin-left: 8px;
  border-radius: 50%;
  background: #4db89a;
}

.quotes {
  display: flex;
  align-items: center;
  gap: 6px;
  margin-top: 4px;
}

.quotes button {
  display: block;
  width: 45px;
  height: 22px;
  border: 1px solid;
  border-radius: 4px;
  background: #fff;
  line-height: 10px;
}

.quotes button span {
  display: block;
  font-size: 8px;
  line-height: 9px;
}

.quotes sup {
  font-size: 7px;
  line-height: 0;
  vertical-align: 1px;
}

.quotes .sell { color: #c9284e; }

.quotes .buy {
  width: 48px;
  color: #2a50d0;
}

.spread {
  width: 9px;
  color: #222;
  font-size: 7px;
}

.favorites {
  position: absolute;
  top: 4px;
  left: 409px;
  display: flex;
  width: 548px;
  height: 25px;
  border-radius: 3px;
  background: #1a1a1a;
}

.favorites button {
  flex: 1;
}

.grip {
  width: 6px;
  height: 9px;
  margin: 8px 5px;
}

.navigation {
  position: absolute;
  bottom: 20px;
  left: 465px;
  display: flex;
  gap: 5px;
}

.navigation button {
  width: 17px;
  height: 17px;
  border-radius: 3px;
  background: #242528;
}

.navigation .group {
  margin-left: 4px;
}

.navigation svg {
  width: 16px;
  height: 16px;
  fill: none;
  stroke: #fff;
}

.logo {
  position: absolute;
  bottom: 8px;
  left: 8px;
  width: 22px;
  height: 12px;
}

.event {
  position: absolute;
  bottom: 1px;
  left: 799px;
  width: 15px;
  height: 15px;
}

.tag-symbol {
  position: absolute;
  top: 324px;
  right: 0;
  width: 32px;
  background: #000;
  color: #fff;
  font-size: 8px;
  font-weight: bold;
  line-height: 11px;
  text-align: center;
}

.price-axis {
  position: relative;
  display: flex;
  flex-direction: column;
  min-height: 0;
  overflow: hidden;
  border-left: 1px solid #3c3e44;
  color: #fff;
  font-size: 8px;
  font-weight: bold;
}

.price-axis select {
  width: 36px;
  height: 17px;
  margin: 3px 2px 5px;
  padding: 0 4px;
  appearance: none;
  border-radius: 3px;
  background: #fff;
  color: #222;
  font-weight: normal;
}

.select-arrow {
  position: absolute;
  top: 3px;
  left: 24px;
  width: 16px;
  height: 16px;
  color: #222;
}

.price-axis ol {
  flex: 1;
  display: flex;
  flex-direction: column;
  justify-content: space-between;
  margin: 0 0 -4px;
  padding: 0 0 0 5px;
  list-style: none;
}

.tag {
  position: absolute;
  left: 0;
  width: 37px;
  padding-left: 5px;
  line-height: 12px;
}

.stop-tag {
  top: 179px;
  background: #4a4a4c;
}

.entry-tag {
  top: 231px;
  background: #80828a;
}

.target-tag {
  top: 420px;
  background: #b0b1b2;
  color: #2a2a2a;
}

.last-tag {
  top: 324px;
  padding-bottom: 1px;
  background: #000;
  line-height: 10px;
}

.last-tag small {
  display: block;
  font-size: 8px;
  line-height: 9px;
  color: #ccc;
}

.time-axis {
  min-width: 0;
  overflow: hidden;
  border-top: 1px solid #3c3e44;
}

.hours {
  display: grid;
  grid-template-columns: repeat(5, 63fr) 65fr 50fr repeat(10, 63fr);
  margin: 0 -26px 0 -5px;
  color: #fff;
  font-size: 8px;
  font-weight: bold;
  line-height: 17px;
  text-align: center;
}

.hours .short {
  padding-right: 12px;
}

.axis-settings {
  border-top: 1px solid #3c3e44;
  border-left: 1px solid #3c3e44;
  color: #222;
}

.axis-settings .icon {
  width: 12px;
  height: 12px;
}

.ranges {
  display: flex;
  align-items: center;
  gap: 6px;
  height: 27px;
  padding: 0 6px 0 10px;
  background: #0f0f0f;
}

.ranges .sep {
  margin-left: 3px;
}

.ranges time {
  margin-left: auto;
}

/* watchlist */
.watchlist {
  position: relative;
  display: flex;
  flex-direction: column;
  width: 145px;
  background: #0f0f0f;
  border-left: 2px solid #2e2e2e;
  border-right: 1px solid #2e2e2e;
}

.collapse {
  position: absolute;
  left: -2px;
  bottom: 40px;
  width: 6px;
  height: 16px;
  background: #0f0f0f;
}

.list-head {
  display: flex;
  align-items: center;
  height: 33px;
  padding: 0 6px 0 11px;
}

.list-name {
  margin: 0 auto 0 6px;
  font-weight: bold;
}

.list-chips {
  display: flex;
  height: 22px;
  padding: 3px 8px 0;
}

.list-chips .flag {
  width: 7px;
  height: 7px;
}

table {
  width: 100%;
  border-collapse: collapse;
}

th, td {
  padding: 0;
  text-align: left;
  font-weight: normal;
}

thead th {
  height: 20px;
  padding: 1px 0 0 11px;
  border-bottom: 1px solid #2e2e2e;
  color: #8c8c8c;
}

thead th:last-child,
td:last-child {
  padding-right: 10px;
  text-align: right;
}

thead th:last-child {
  padding-left: 0;
}

tbody tr {
  height: 20px;
}

td {
  padding-top: 1px;
  border-bottom: 1px solid #2e2e2e;
  line-height: 12px;
}

td:first-child {
  width: 11px;
  padding-left: 1px;
}

td .flag {
  display: block;
}

.name {
  display: flex;
  align-items: center;
  gap: 3px;
  color: #e2e2e2;
}

.coin text {
  fill: #fff;
  font-size: 6px;
  font-weight: bold;
}

.coin .btc {
  font-size: 8px;
}

.group {
  height: 24px;
}

.group.first {
  height: 28px;
}

.group th {
  padding: 4px 0 0 8px;
  color: #7a7a7a;
  font-size: 8px;
}

.group.first th {
  padding-top: 8px;
}

.group .icon {
  width: 16px;
  height: 12px;
  margin-right: 3px;
  vertical-align: middle;
}

.selected {
  outline: 1px solid #c9c9c9;
  outline-offset: -1px;
  border-radius: 3px;
}

.list-foot {
  display: flex;
  align-items: center;
  height: 34px;
  margin-top: auto;
  padding: 0 6px 0 11px;
  border-top: 2px solid #2e2e2e;
}

.list-foot .coin {
  width: 16px;
  height: 16px;
}

.list-foot b {
  margin: 0 auto 0 5px;
}

/* right rail */
.rail {
  display: flex;
  flex-direction: column;
  align-items: center;
  width: 30px;
  padding-top: 4px;
  background: #0f0f0f;
}

.rail button {
  position: relative;
  width: 26px;
  height: 32px;
}

.rail .active {
  height: 25px;
}

.rail .badge {
  top: 5px;
  right: -2px;
}

.rail-bottom {
  display: flex;
  flex-direction: column;
  align-items: center;
  margin-top: auto;
}

.rail-bottom button {
  height: 30px;
}

.rail-bottom .badge {
  top: 1px;
}

.rail-bottom hr {
  margin: 5px 0 4px;
}

.rail .apps {
  width: 23px;
  height: 23px;
  padding: 2px;
  border-radius: 50%;
  background: #fff;
}
```
FILE: chart.js
```js
// candles: x, high, body top, body bottom, low, direction (1 = up, 0 = down)
const candles = [
  [38, 220, 220, 306, 306, 1], [42, 168, 198, 215, 238, 1], [47, 183, 200, 333, 359, 0], [52, 280, 304, 332, 383, 1],
  [57, 217, 239, 310, 361, 1], [63, 214, 241, 256, 276, 0], [68, 186, 257, 284, 293, 0], [73, 203, 241, 286, 290, 1],
  [79, 167, 213, 243, 263, 1], [83, 160, 191, 211, 223, 1], [89, 168, 193, 241, 246, 0], [94, 158, 220, 239, 246, 1],
  [99, 173, 185, 223, 226, 1], [105, 172, 183, 245, 255, 0], [110, 210, 245, 267, 272, 0], [115, 233, 267, 289, 297, 0],
  [120, 205, 229, 291, 315, 1], [125, 184, 215, 234, 268, 1], [131, 215, 215, 260, 287, 0], [136, 211, 248, 258, 272, 1],
  [141, 162, 168, 250, 257, 1], [147, 160, 167, 170, 205, 1], [152, 129, 165, 170, 174, 0], [157, 161, 168, 178, 206, 0],
  [162, 148, 151, 180, 217, 1], [167, 75, 93, 152, 156, 1], [173, 75, 76, 93, 93, 1], [178, 60, 70, 78, 90, 0],
  [183, 53, 53, 76, 81, 1], [189, 53, 53, 57, 89, 0], [194, 60, 69, 87, 98, 0], [199, 53, 53, 85, 102, 1],
  [204, 53, 53, 54, 58, 1], [225, 53, 53, 115, 125, 0], [231, 102, 115, 126, 126, 0], [236, 78, 90, 124, 128, 1],
  [241, 53, 53, 92, 92, 1], [246, 53, 53, 82, 90, 0], [251, 53, 53, 85, 99, 1], [325, 53, 53, 401, 401, 0],
  [330, 243, 253, 402, 434, 1], [335, 209, 246, 260, 402, 0], [341, 150, 193, 260, 281, 1], [346, 176, 191, 223, 246, 0],
  [351, 189, 203, 236, 247, 0], [356, 168, 193, 215, 222, 1], [361, 129, 133, 198, 220, 1], [367, 53, 53, 135, 143, 1],
  [372, 53, 53, 54, 101, 0], [377, 258, 259, 334, 343, 0], [382, 134, 141, 336, 336, 1], [387, 92, 92, 111, 120, 1],
  [393, 92, 92, 120, 128, 0], [398, 120, 120, 139, 157, 0], [403, 139, 141, 217, 228, 0], [409, 214, 224, 263, 263, 0],
  [414, 246, 253, 262, 285, 1], [419, 256, 271, 277, 282, 0], [424, 274, 274, 288, 288, 0], [429, 78, 214, 236, 238, 1],
  [435, 138, 167, 189, 236, 1], [440, 165, 168, 200, 209, 0], [445, 193, 200, 228, 228, 0], [451, 142, 151, 228, 228, 1],
  [456, 163, 163, 174, 179, 0], [461, 168, 176, 197, 205, 0], [466, 169, 185, 199, 202, 1], [471, 170, 183, 221, 229, 0],
  [476, 197, 219, 220, 240, 1], [482, 217, 220, 223, 252, 0], [487, 214, 220, 241, 244, 0], [493, 211, 241, 267, 275, 0],
  [498, 241, 265, 269, 271, 0], [503, 243, 262, 269, 270, 1], [508, 222, 245, 263, 266, 1], [513, 221, 243, 247, 252, 1],
  [519, 194, 220, 239, 239, 1], [524, 213, 222, 246, 252, 0], [529, 217, 222, 247, 252, 1], [534, 168, 174, 221, 225, 1],
  [539, 141, 176, 184, 222, 0], [545, 148, 152, 180, 200, 1], [550, 103, 114, 152, 155, 1], [555, 103, 114, 221, 238, 0],
  [561, 208, 224, 227, 286, 0], [566, 158, 163, 232, 234, 1], [571, 118, 126, 171, 238, 1], [576, 70, 122, 124, 135, 1],
  [581, 70, 120, 125, 142, 0], [587, 118, 125, 156, 182, 0], [592, 127, 151, 167, 177, 0], [597, 135, 150, 151, 179, 1],
  [603, 143, 165, 321, 440, 0], [607, 262, 322, 462, 552, 0], [613, 388, 421, 464, 513, 1], [618, 350, 356, 421, 447, 1],
  [623, 356, 357, 508, 510, 0], [629, 406, 406, 505, 552, 1], [634, 371, 408, 471, 479, 0], [639, 418, 425, 473, 475, 1],
  [644, 377, 402, 427, 430, 1], [649, 397, 402, 403, 441, 1], [655, 386, 400, 425, 435, 0], [660, 402, 428, 434, 439, 0],
  [665, 371, 425, 432, 480, 1], [671, 400, 400, 425, 426, 1], [676, 380, 402, 564, 612, 0], [681, 520, 538, 566, 614, 1],
  [686, 440, 475, 539, 548, 1], [692, 392, 406, 473, 473, 1], [697, 372, 404, 405, 406, 1], [702, 371, 387, 407, 417, 1],
  [707, 376, 385, 404, 411, 0], [713, 383, 397, 451, 460, 0], [718, 385, 451, 454, 461, 0], [723, 430, 452, 483, 483, 0],
  [728, 482, 484, 527, 541, 0], [733, 482, 521, 529, 541, 1], [739, 478, 478, 523, 540, 1], [744, 475, 478, 495, 530, 0],
  [749, 428, 434, 495, 500, 1], [755, 435, 436, 438, 468, 0], [759, 376, 392, 435, 454, 1], [765, 361, 361, 395, 396, 1],
  [770, 354, 356, 390, 406, 0], [775, 350, 368, 388, 409, 1], [781, 337, 367, 414, 414, 0], [786, 360, 389, 418, 426, 1],
  [791, 361, 384, 388, 408, 1], [796, 333, 341, 384, 388, 1], [801, 296, 315, 341, 341, 1], [807, 262, 305, 314, 319, 1],
  [812, 283, 298, 305, 318, 1], [817, 299, 300, 334, 337, 0], [823, 312, 317, 332, 332, 1], [828, 317, 317, 367, 377, 0],
  [833, 357, 369, 407, 418, 0], [838, 406, 406, 408, 434, 0], [843, 352, 382, 412, 421, 1]
];

const layer = document.getElementById('candles-layer');

candles.forEach(([x, high, top, bottom, low, up]) => {
  const side = up ? 'up' : 'down';
  layer.insertAdjacentHTML('beforeend',
    `<path class="wick-${side}" d="M${x + 0.5} ${high}V${low}"/>` +
    `<rect class="body-${side}" x="${x - 1}" y="${top}" width="3" height="${bottom - top}"/>`);
});
```
